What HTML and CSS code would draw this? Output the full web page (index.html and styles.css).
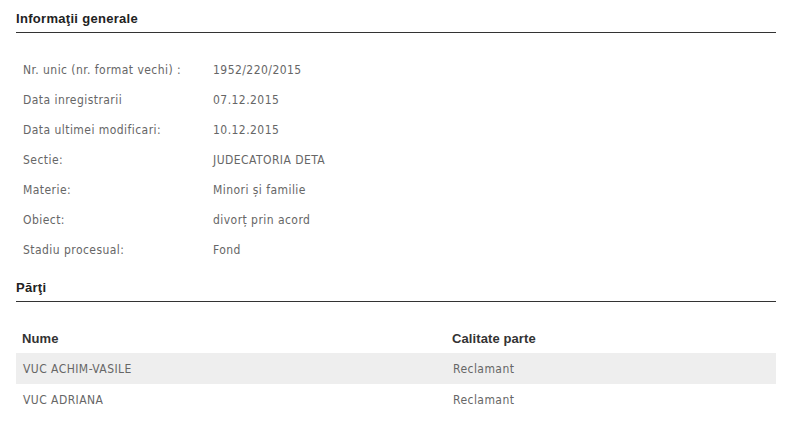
FILE: index.html
```html
<!DOCTYPE html>
<html lang="ro">
<head>
<meta charset="utf-8">
<link rel="stylesheet" href="styles.css">
</head>
<body>
<div class="page">
  <h2 class="section-title">Informaţii generale</h2>
  <table class="info">
    <tr><td class="label">Nr. unic (nr. format vechi) :</td><td>1952/220/2015</td></tr>
    <tr><td class="label">Data inregistrarii</td><td>07.12.2015</td></tr>
    <tr><td class="label">Data ultimei modificari:</td><td>10.12.2015</td></tr>
    <tr><td class="label">Sectie:</td><td>JUDECATORIA DETA</td></tr>
    <tr><td class="label">Materie:</td><td>Minori și familie</td></tr>
    <tr><td class="label">Obiect:</td><td>divorț prin acord</td></tr>
    <tr><td class="label">Stadiu procesual:</td><td>Fond</td></tr>
  </table>
  <h2 class="section-title second">Părţi</h2>
  <table class="parti">
    <thead>
      <tr><th class="col-name">Nume</th><th>Calitate parte</th></tr>
    </thead>
    <tbody>
      <tr class="odd"><td>VUC ACHIM-VASILE</td><td>Reclamant</td></tr>
      <tr><td>VUC ADRIANA</td><td>Reclamant</td></tr>
    </tbody>
  </table>
</div>
</body>
</html>
```
FILE: styles.css
```css
html, body {
  margin: 0;
  padding: 0;
  background: #fff;
}
.page {
  width: 760px;
  padding-left: 16px;
}
.section-title {
  margin: 0;
  padding: 10px 0 4px 0;
  font-family: "Liberation Sans", Arial, sans-serif;
  font-size: 13px;
  font-weight: bold;
  line-height: 18px;
  letter-spacing: 0.3px;
  color: #222;
  border-bottom: 1px solid #333;
}
.section-title.second {
  margin-top: 4px;
}
.info, .parti {
  border-collapse: collapse;
  width: 100%;
  font-family: "DejaVu Sans Condensed", "DejaVu Sans", sans-serif;
  font-size: 12px;
  letter-spacing: 0.45px;
  color: #666;
}
.info {
  margin-top: 22px;
}
.info td {
  height: 30px;
  padding: 0 0 0 7px;
  vertical-align: middle;
}
.info td.label {
  width: 183px;
}
.parti {
  margin-top: 21px;
}
.parti th {
  height: 30px;
  padding: 0 0 0 6px;
  text-align: left;
  font-family: "Liberation Sans", Arial, sans-serif;
  font-size: 13px;
  font-weight: bold;
  letter-spacing: 0.1px;
  color: #333;
}
.parti th.col-name {
  width: 424px;
}
.parti td {
  height: 30px;
  padding: 1px 0 0 7px;
}
.parti tr.odd td {
  background: #eeeeee;
}
```
